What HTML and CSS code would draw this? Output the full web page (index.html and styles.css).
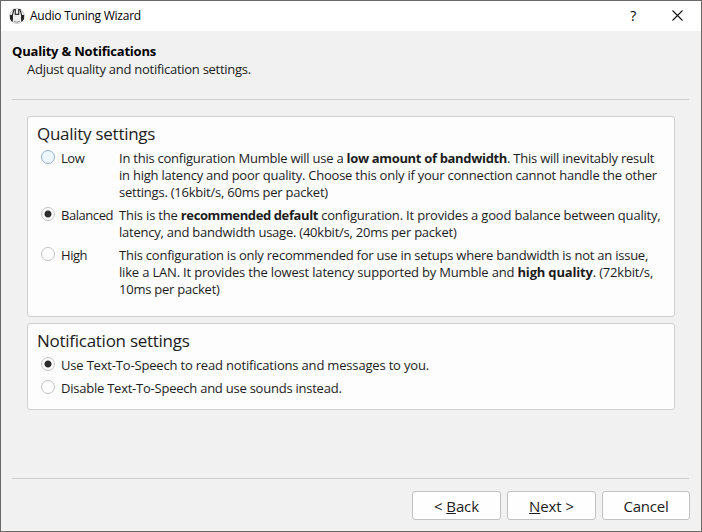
FILE: index.html
```
<!DOCTYPE html>
<html lang="en">
<head>
<meta charset="utf-8">
<title>Audio Tuning Wizard</title>
<link rel="stylesheet" href="styles.css">
</head>
<body>
<div class="window">
  <header class="titlebar">
    <svg class="logo" width="16" height="16" viewBox="0 0 16 16"><circle cx="8" cy="8" r="7.4" fill="#eee" stroke="#bbb" stroke-width=".8"/><path d="M3.2 12V7.5L5 1.7h1.3v4.6h3.4V1.7H11l1.8 5.8V12" fill="none" stroke="#333" stroke-width="1.2"/><path d="M1 7h2.8v6.5H2.6L1 10.8zM15 7h-2.8v6.5h1.2l1.6-2.7z" fill="#222"/><path d="M5 13.2q3 2 6 0" fill="none" stroke="#999"/></svg>
    <span class="title">Audio Tuning Wizard</span>
    <span class="help">?</span>
    <svg class="close" width="11" height="11" viewBox="0 0 11 11"><path d="M.5.5l10 10M10.5.5l-10 10" stroke="#111" stroke-width="1.1"/></svg>
  </header>
  <div class="heading">
    <h1>Quality &amp; Notifications</h1>
    <p>Adjust quality and notification settings.</p>
  </div>
  <main class="content">
    <section class="group quality">
      <h2>Quality settings</h2>
      <div class="option low"><i class="radio hover"></i><span class="name">Low</span>
        <p><span class="tight">In this configuration Mumble will use a <b>low amount of bandwidth</b>. This will inevitably result</span><br>in high latency and poor quality. Choose this only if your connection cannot handle the other<br>settings. (16kbit/s, 60ms per packet)</p></div>
      <div class="option balanced"><i class="radio checked"></i><span class="name">Balanced</span>
        <p><span class="loose">This is the <b>recommended default</b> configuration. It provides a good balance between quality,</span><br>latency, and bandwidth usage. (40kbit/s, 20ms per packet)</p></div>
      <div class="option high"><i class="radio"></i><span class="name">High</span>
        <p>This configuration is only recommended for use in setups where bandwidth is not an issue,<br><span class="looser">like a LAN. It provides the lowest latency supported by Mumble and <b>high quality</b>. (72kbit/s,</span><br>10ms per packet)</p></div>
    </section>
    <section class="group notify">
      <h2>Notification settings</h2>
      <div class="option"><i class="radio checked"></i><span class="label looser">Use Text-To-Speech to read notifications and messages to you.</span></div>
      <div class="option"><i class="radio"></i><span class="label">Disable Text-To-Speech and use sounds instead.</span></div>
    </section>
  </main>
  <hr>
  <footer class="buttons"><button>&lt; <u>B</u>ack</button><button><u>N</u>ext &gt;</button><button class="cancel">Cancel</button></footer>
</div>
</body>
</html>
```
FILE: styles.css
```
* { box-sizing: border-box; }
body { margin: 0; font: 13px/17px "Open Sans", "Noto Sans", sans-serif; color: #1c1c1c; letter-spacing: -.235px; white-space: nowrap; }
h1, h2, p { margin: 0; font-weight: 400; }
.window { width: 702px; height: 532px; background: #f1f1f1; border: 1px solid #6b6868; display: flex; flex-direction: column; }
.titlebar { height: 30px; flex: none; background: #fff; display: flex; align-items: center; padding: 0 18px 2px 8px; color: #000; }
.logo { margin-top: 1px; }
.title { margin-left: 5px; flex: 1; font-size: 12px; letter-spacing: -.25px; }
.help { margin-right: 36px; font-size: 14px; }
.heading { height: 69px; flex: none; margin: 0 12px 0 11px; padding-top: 11px; border-bottom: 1px solid #cdcdcd; line-height: 18px; }
.heading h1 { font-size: 13px; font-weight: 700; color: #000; letter-spacing: -.2px; }
.heading p { padding-left: 15px; letter-spacing: -.27px; }
.content { flex: 1; padding: 16px 26px 0; }
.group { background: #fdfdfd; border: 1px solid #d0d0d0; border-radius: 3px; padding: 5px 0 0 13px; }
.quality { height: 201px; margin-bottom: 6px; }
.notify { height: 87px; }
.group h2 { font-size: 17px; line-height: 24px; margin-left: -4px; letter-spacing: -.27px; }
.option { display: flex; height: 23px; padding-top: 4px; }
.radio { width: 14px; height: 14px; border: 1px solid #c2c2c2; border-radius: 50%; margin-right: 6px; background: #fff; flex: none; }
.hover { background: #eef7fd; border-color: #8fb0cc; }
.checked { background: radial-gradient(circle, #2d2d2d 3px, #fff 4px); }
.name { width: 58px; flex: none; letter-spacing: -.45px; }
.tight { letter-spacing: -.24px; }
.tight b { letter-spacing: -.33px; }
.loose { letter-spacing: -.19px; }
.loose b { letter-spacing: -.39px; }
.looser { letter-spacing: -.18px; }
.low { height: 57px; }
.balanced { height: 40px; }
hr { flex: none; height: 1px; margin: 0 12px 0 11px; border: 0; background: #cdcdcd; }
.buttons { height: 52px; flex: none; margin: 0 11px; display: flex; justify-content: flex-end; gap: 6px; padding-top: 12px; }
button { width: 89px; height: 29px; padding: 0; background: #fefefe; border: 1px solid #c2c2c2; border-radius: 3px; font: 15px/20px "Open Sans", sans-serif; color: #1c1c1c; letter-spacing: -.1px; }
.cancel { width: 88px; letter-spacing: -.2px; }
```
